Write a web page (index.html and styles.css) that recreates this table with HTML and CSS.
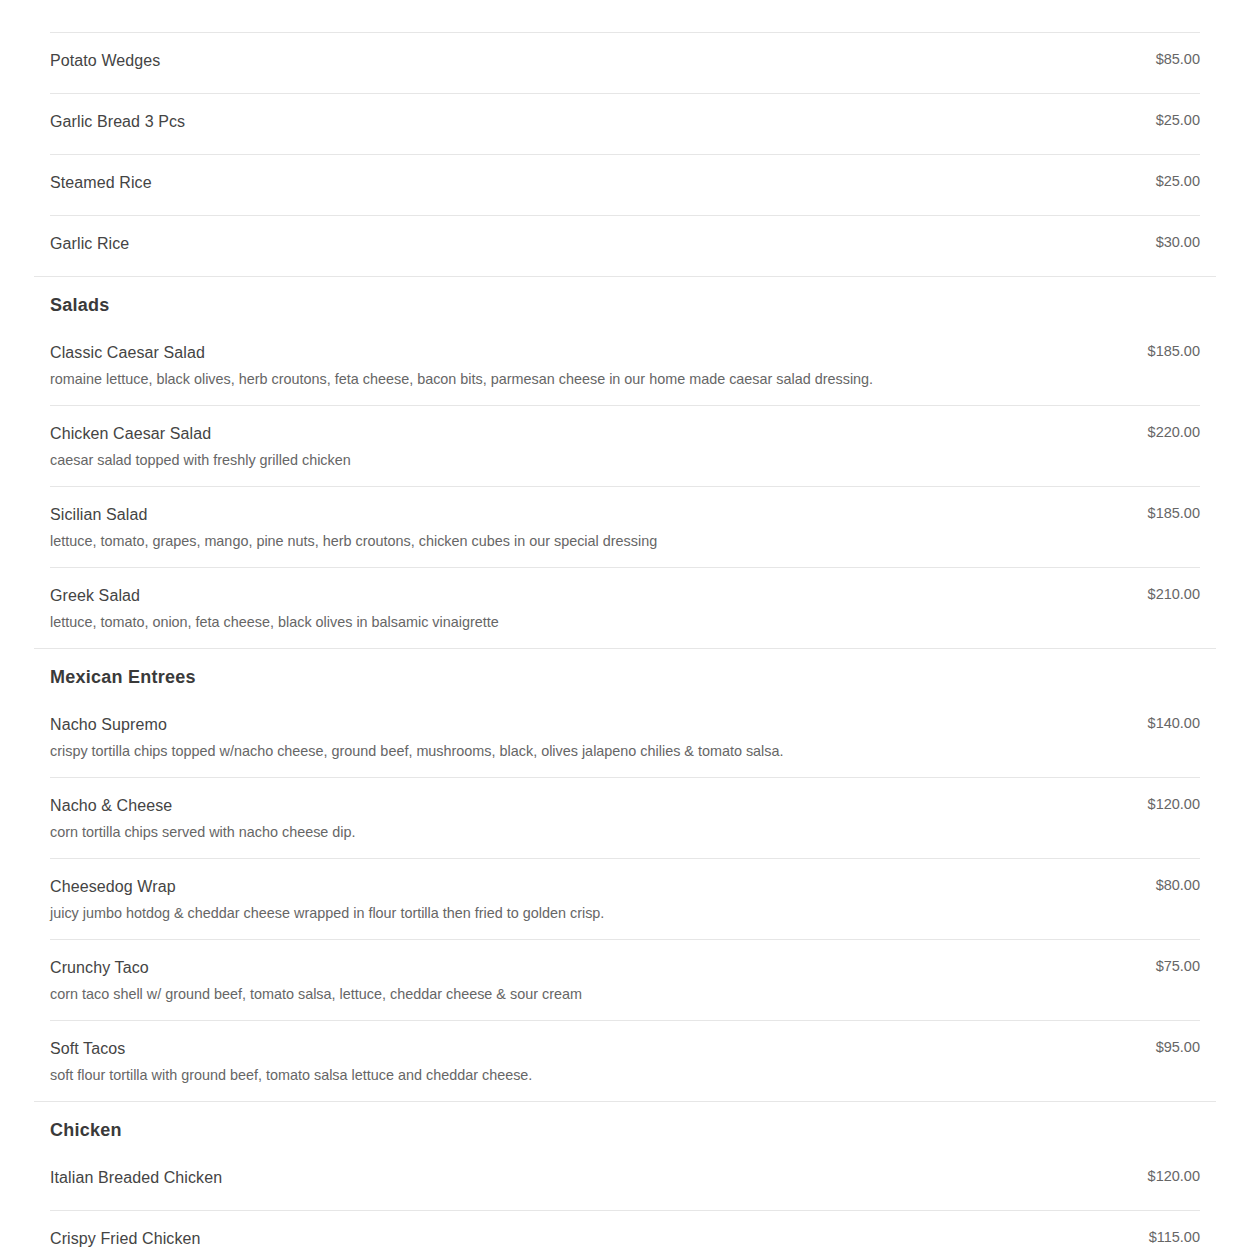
FILE: index.html
```html
<!DOCTYPE html>
<html lang="en">
<head>
<meta charset="utf-8">
<title>Menu</title>
<link rel="stylesheet" href="styles.css">
</head>
<body>
<main class="menu">
  <section class="section">
    <ul class="items">
      <li class="item"><div class="info"><h4 class="name">French Fries</h4></div><span class="price">$85.00</span></li>
      <li class="item"><div class="info"><h4 class="name">Potato Wedges</h4></div><span class="price">$85.00</span></li>
      <li class="item"><div class="info"><h4 class="name">Garlic Bread 3 Pcs</h4></div><span class="price">$25.00</span></li>
      <li class="item"><div class="info"><h4 class="name">Steamed Rice</h4></div><span class="price">$25.00</span></li>
      <li class="item"><div class="info"><h4 class="name">Garlic Rice</h4></div><span class="price">$30.00</span></li>
    </ul>
  </section>
  <section class="section">
    <h3 class="heading">Salads</h3>
    <ul class="items">
      <li class="item"><div class="info"><h4 class="name">Classic Caesar Salad</h4><p class="desc">romaine lettuce, black olives, herb croutons, feta cheese, bacon bits, parmesan cheese in our home made caesar salad dressing.</p></div><span class="price">$185.00</span></li>
      <li class="item"><div class="info"><h4 class="name">Chicken Caesar Salad</h4><p class="desc">caesar salad topped with freshly grilled chicken</p></div><span class="price">$220.00</span></li>
      <li class="item"><div class="info"><h4 class="name">Sicilian Salad</h4><p class="desc">lettuce, tomato, grapes, mango, pine nuts, herb croutons, chicken cubes in our special dressing</p></div><span class="price">$185.00</span></li>
      <li class="item"><div class="info"><h4 class="name">Greek Salad</h4><p class="desc">lettuce, tomato, onion, feta cheese, black olives in balsamic vinaigrette</p></div><span class="price">$210.00</span></li>
    </ul>
  </section>
  <section class="section">
    <h3 class="heading">Mexican Entrees</h3>
    <ul class="items">
      <li class="item"><div class="info"><h4 class="name">Nacho Supremo</h4><p class="desc">crispy tortilla chips topped w/nacho cheese, ground beef, mushrooms, black, olives jalapeno chilies &amp; tomato salsa.</p></div><span class="price">$140.00</span></li>
      <li class="item"><div class="info"><h4 class="name">Nacho &amp; Cheese</h4><p class="desc">corn tortilla chips served with nacho cheese dip.</p></div><span class="price">$120.00</span></li>
      <li class="item"><div class="info"><h4 class="name">Cheesedog Wrap</h4><p class="desc">juicy jumbo hotdog &amp; cheddar cheese wrapped in flour tortilla then fried to golden crisp.</p></div><span class="price">$80.00</span></li>
      <li class="item"><div class="info"><h4 class="name">Crunchy Taco</h4><p class="desc">corn taco shell w/ ground beef, tomato salsa, lettuce, cheddar cheese &amp; sour cream</p></div><span class="price">$75.00</span></li>
      <li class="item"><div class="info"><h4 class="name">Soft Tacos</h4><p class="desc">soft flour tortilla with ground beef, tomato salsa lettuce and cheddar cheese.</p></div><span class="price">$95.00</span></li>
    </ul>
  </section>
  <section class="section">
    <h3 class="heading">Chicken</h3>
    <ul class="items">
      <li class="item"><div class="info"><h4 class="name">Italian Breaded Chicken</h4></div><span class="price">$120.00</span></li>
      <li class="item"><div class="info"><h4 class="name">Crispy Fried Chicken</h4></div><span class="price">$115.00</span></li>
    </ul>
  </section>
</main>
</body>
</html>
```
FILE: styles.css
```css
* { box-sizing: border-box; }
html, body { background: #fff; }
body {
  margin: 8px;
  font-family: "Liberation Sans", Arial, sans-serif;
  color: #444;
}
.menu {
  margin: -36px 26px 0;
}
.section {
  border-bottom: 1px solid #e6e6e6;
  padding: 0 16px;
}
.heading {
  margin: 0;
  padding: 15px 0 6px;
  font-size: 18px;
  line-height: 27px;
  letter-spacing: 0.25px;
  font-weight: bold;
  color: #3a3a3a;
}
.items {
  list-style: none;
  margin: 0;
  padding: 0;
}
.item {
  display: flex;
  justify-content: space-between;
  align-items: flex-start;
  gap: 16px;
  padding: 16px 0;
  border-top: 1px solid #e6e6e6;
}
.item:first-child { border-top: none; }
.name {
  margin: 0 0 4px;
  font-size: 16px;
  line-height: 24px;
  letter-spacing: 0.1px;
  font-weight: normal;
  color: #444;
}
.desc {
  margin: 0;
  font-size: 14.4px;
  line-height: 20px;
  color: #666;
}
.price {
  font-size: 14.5px;
  line-height: 21px;
  color: #666;
  white-space: nowrap;
}
```
